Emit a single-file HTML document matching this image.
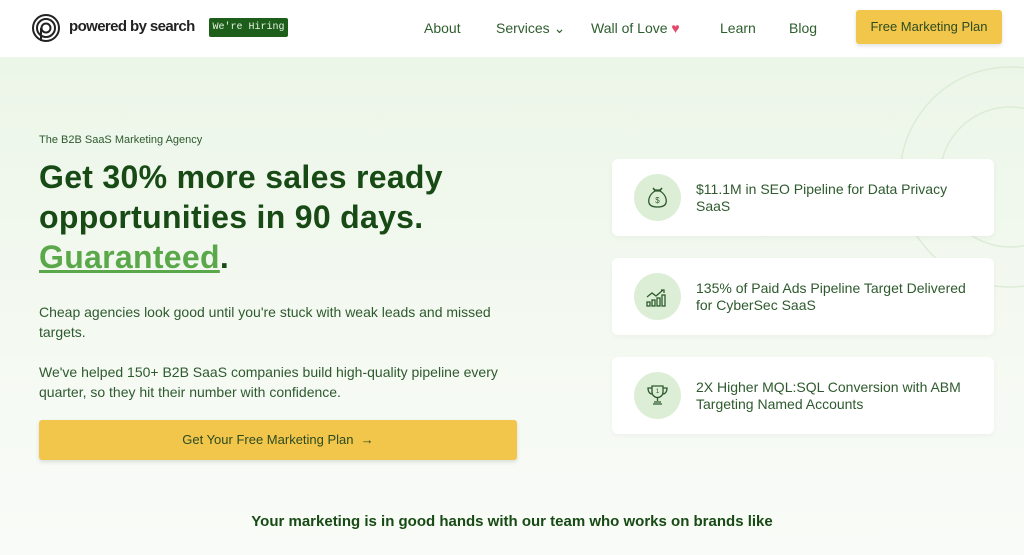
<!DOCTYPE html>
<html><head><style>
*{margin:0;padding:0;box-sizing:border-box}
body{width:1024px;height:555px;overflow:hidden;font-family:"Liberation Sans",sans-serif;background:#f2f8ef;position:relative}
.hdr{position:absolute;left:0;top:0;width:1024px;height:57px;background:#fff;}
.nav a{position:absolute;top:20px;font-size:14px;color:#2e5e2e;text-decoration:none;white-space:nowrap}
.hero{position:absolute;top:57px;left:0;width:1024px;height:498px;background:linear-gradient(#ecf6e8,#f6faf4 70%,#f8fbf7)}
.card{position:absolute;left:612px;width:382px;height:77px;background:#fff;border-radius:6px;box-shadow:0 2px 6px rgba(0,0,0,.04)}
.ic{position:absolute;left:22px;top:15px;width:47px;height:47px;border-radius:50%;background:#dcefd6}
.ic svg{position:absolute;left:11px;top:11px}
.ct{position:absolute;left:84px;top:22px;font-size:14px;line-height:17px;color:#2e5a2e}
</style></head><body>
<div class="hdr">
<svg style="position:absolute;left:31px;top:13px" width="30" height="30" viewBox="0 0 30 30" fill="none" stroke="#222" stroke-width="2"><circle cx="15" cy="15" r="13"/><circle cx="15" cy="15" r="9"/><circle cx="15" cy="15" r="4.5"/><path d="M10 15v13"/></svg>
<div style="position:absolute;left:69px;top:18px;font-size:15px;font-weight:bold;color:#222;letter-spacing:-.6px;white-space:nowrap">powered by search</div>
<div style="position:absolute;left:209px;top:18px;width:79px;height:19px;background:#1d5e1a;border-radius:2px;color:#e8f3e2;font:10px 'Liberation Mono',monospace;text-align:center;line-height:19px;white-space:nowrap">We're Hiring</div>
<div class="nav"><a style="left:424px">About</a><a style="left:496px">Services ⌄</a><a style="left:591px">Wall of Love <span style="color:#e24a6a">♥</span></a><a style="left:720px">Learn</a><a style="left:789px">Blog</a></div>
<div style="position:absolute;left:856px;top:10px;width:146px;height:34px;background:#f2c54b;border-radius:3px;box-shadow:0 2px 4px rgba(0,0,0,.12);font-size:13px;color:#2c4c1f;text-align:center;line-height:34px">Free Marketing Plan</div>
</div>
<div class="hero">
<svg style="position:absolute;left:860px;top:0" width="164" height="320" fill="none" stroke="#dcecd6" stroke-width="1.5"><circle cx="150" cy="120" r="110"/><circle cx="150" cy="120" r="70"/></svg>
<div style="position:absolute;left:39px;top:77px;font-size:11px;color:#2e5a2e">The B2B SaaS Marketing Agency</div>
<div style="position:absolute;left:39px;top:100px;font-size:32px;font-weight:bold;line-height:40px;color:#174a14;letter-spacing:.3px">Get 30% more sales ready<br>opportunities in 90 days.<br><span style="color:#5aa84a;text-decoration:underline">Guaranteed</span>.</div>
<div style="position:absolute;left:39px;top:245px;width:480px;font-size:14px;line-height:20px;color:#2e5a2e">Cheap agencies look good until you're stuck with weak leads and missed targets.<br><br>We've helped 150+ B2B SaaS companies build high-quality pipeline every quarter, so they hit their number with confidence.</div>
<div style="position:absolute;left:39px;top:363px;width:478px;height:40px;background:#f2c54b;border-radius:3px;box-shadow:0 2px 4px rgba(0,0,0,.12);text-align:center;line-height:40px;font-size:13px;color:#2c4c1f">Get Your Free Marketing Plan &nbsp;→</div>
<div class="card" style="top:102px"><div class="ic"><svg width="25" height="25" viewBox="0 0 25 25" fill="none" stroke="#2e5a2e" stroke-width="1.3"><path d="M8 3l2 2h5l2-2-2 3h-5z"/><path d="M10 6c-5 3-7 8-6 12 1 3 4 4 8.5 4s7.5-1 8.5-4c1-4-1-9-6-12"/><text x="12.5" y="18" font-size="8" text-anchor="middle" fill="#2e5a2e" stroke="none" font-family="Liberation Sans">$</text></svg></div><div class="ct">$11.1M in SEO Pipeline for Data Privacy<br>SaaS</div></div>
<div class="card" style="top:201px"><div class="ic"><svg width="25" height="25" viewBox="0 0 25 25" fill="none" stroke="#2e5a2e" stroke-width="1.3"><path d="M2 13l5-4 4 3 7-6M16 6h3v3"/><rect x="2" y="18" width="3" height="4"/><rect x="7" y="16" width="3" height="6"/><rect x="12" y="14" width="3" height="8"/><rect x="17" y="11" width="3" height="11"/></svg></div><div class="ct">135% of Paid Ads Pipeline Target Delivered<br>for CyberSec SaaS</div></div>
<div class="card" style="top:300px"><div class="ic"><svg width="25" height="25" viewBox="0 0 25 25" fill="none" stroke="#2e5a2e" stroke-width="1.3"><path d="M7 3h11v6a5.5 5.5 0 01-11 0z"/><path d="M7 5H3c0 4 2 6 4 6M18 5h4c0 4-2 6-4 6M12.5 14v4M8 21h9M9 19h7"/><text x="12.5" y="10" font-size="6" text-anchor="middle" fill="#2e5a2e" stroke="none" font-family="Liberation Sans">1</text></svg></div><div class="ct">2X Higher MQL:SQL Conversion with ABM<br>Targeting Named Accounts</div></div>
<div style="position:absolute;left:0;width:1024px;top:456px;text-align:center;font-size:15px;font-weight:bold;color:#174a14">Your marketing is in good hands with our team who works on brands like</div>
</div>
</body></html>
